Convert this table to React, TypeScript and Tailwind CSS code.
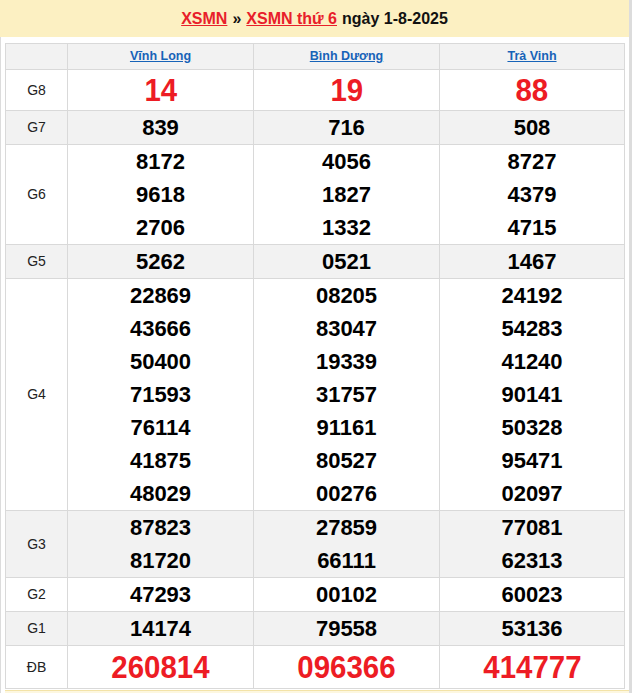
const provinces = ["Vĩnh Long", "Bình Dương", "Trà Vinh"]

type Prize = {
  label: string
  values: string[][]
  big?: boolean
  shaded?: boolean
}

const prizes: Prize[] = [
  { label: "G8", values: [["14"], ["19"], ["88"]], big: true },
  { label: "G7", values: [["839"], ["716"], ["508"]], shaded: true },
  {
    label: "G6",
    values: [
      ["8172", "9618", "2706"],
      ["4056", "1827", "1332"],
      ["8727", "4379", "4715"],
    ],
  },
  { label: "G5", values: [["5262"], ["0521"], ["1467"]], shaded: true },
  {
    label: "G4",
    values: [
      ["22869", "43666", "50400", "71593", "76114", "41875", "48029"],
      ["08205", "83047", "19339", "31757", "91161", "80527", "00276"],
      ["24192", "54283", "41240", "90141", "50328", "95471", "02097"],
    ],
  },
  {
    label: "G3",
    values: [
      ["87823", "81720"],
      ["27859", "66111"],
      ["77081", "62313"],
    ],
    shaded: true,
  },
  { label: "G2", values: [["47293"], ["00102"], ["60023"]] },
  { label: "G1", values: [["14174"], ["79558"], ["53136"]], shaded: true },
  { label: "ĐB", values: [["260814"], ["096366"], ["414777"]], big: true },
]

export default function App() {
  return (
    <div className="flex h-[693px] w-[632px] overflow-hidden bg-white font-['Liberation_Sans',Arial,sans-serif]">
      <div className="flex w-[629px] flex-col">
        <div className="flex h-[37px] shrink-0 items-center justify-center bg-[#fcf0c2] text-[16px] font-bold text-[#111]">
          <a href="#" className="text-[#e8202a] underline">
            XSMN
          </a>
          <span className="mx-[5px]">»</span>
          <a href="#" className="text-[#e8202a] underline">
            XSMN thứ 6
          </a>
          <span className="ml-[5px]">ngày 1-8-2025</span>
        </div>
        <div className="flex-1 border-l border-[#dcdcdc] pl-[4px] pt-[6px]">
          <table className="w-[619px] table-fixed border-collapse border border-[#d9d9d9]">
            <colgroup>
              <col className="w-[62px]" />
              <col className="w-[186px]" />
              <col className="w-[186px]" />
              <col className="w-[185px]" />
            </colgroup>
            <thead>
              <tr className="bg-[#f2f2f2]">
                <th className="border border-[#d9d9d9] p-0" />
                {provinces.map((p) => (
                  <th
                    key={p}
                    className="h-[25px] border border-[#d9d9d9] p-0 text-[12.5px] font-bold leading-[25px]"
                  >
                    <a href="#" className="text-[#1763b8] underline">
                      {p}
                    </a>
                  </th>
                ))}
              </tr>
            </thead>
            <tbody>
              {prizes.map((row) => (
                <tr
                  key={row.label}
                  className={row.shaded ? "bg-[#f2f2f2]" : "bg-white"}
                >
                  <td className="border border-[#d9d9d9] p-0 text-center text-[14px] text-[#222]">
                    {row.label}
                  </td>
                  {row.values.map((nums, i) => (
                    <td
                      key={i}
                      className="border border-[#d9d9d9] p-0 text-center"
                    >
                      {nums.map((n) =>
                        row.big ? (
                          <div
                            key={n}
                            className={
                              row.label === "G8"
                                ? "h-[40px] text-[32px] font-bold leading-[40px] text-[#ed1c24]"
                                : "h-[42px] text-[32px] font-bold leading-[42px] text-[#ed1c24]"
                            }
                          >
                            <span className="inline-block scale-x-[0.92]">{n}</span>
                          </div>
                        ) : (
                          <div
                            key={n}
                            className="text-[22px] font-bold leading-[33px] text-black"
                          >
                            {n}
                          </div>
                        )
                      )}
                    </td>
                  ))}
                </tr>
              ))}
            </tbody>
          </table>
          <div className="mt-[1px] h-[10px] border-t border-[#f3e3a8] bg-[#fdf7e0]" />
        </div>
      </div>
      <div className="w-[3px] shrink-0 bg-[#dcdcdc]" />
    </div>
  )
}
